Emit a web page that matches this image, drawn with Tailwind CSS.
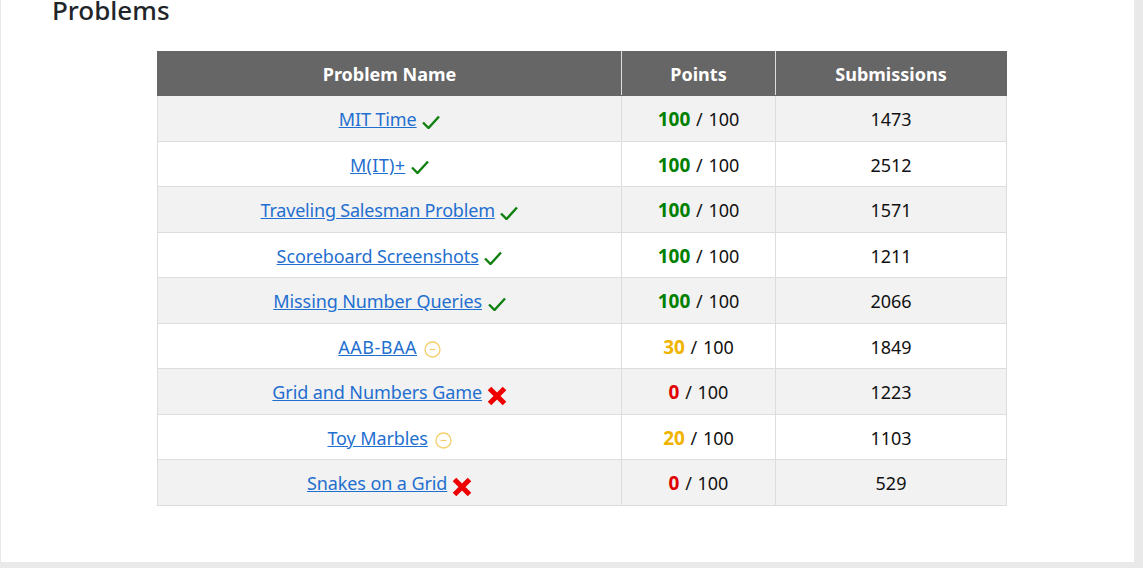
<!DOCTYPE html>
<html lang="en">

<head>
    <meta charset="UTF-8">
    <title>Problems</title>
    <script src="https://cdn.jsdelivr.net/npm/@tailwindcss/browser@4"></script>
</head>

<body class="bg-[#e9e9e9] h-[568px] overflow-hidden font-['Noto_Sans',sans-serif] text-[#111]">
    <!-- Card -->
    <div class="ml-px w-[1133px] h-[562px] bg-white pl-[51px] overflow-hidden">
        <h2 class="h-[51px] text-[26px] leading-[20px] font-medium text-[#212529]">Problems</h2>

        <table class="ml-[105px] w-[849px] table-fixed border-collapse text-[18px] text-center [&_td]:pt-[2px] [&_th]:pt-[2px] [&_td:nth-child(2)]:[word-spacing:1px]">
            <colgroup>
                <col class="w-[464px]">
                <col class="w-[154px]">
                <col class="w-[231px]">
            </colgroup>
            <thead>
                <tr class="h-[44px] bg-[#666] text-white text-[18px] font-bold">
                    <th class="border border-[#666] border-r-[#ddd]">Problem Name</th>
                    <th class="border border-[#666] border-r-[#ddd]">Points</th>
                    <th class="border border-[#666]">Submissions</th>
                </tr>
            </thead>
            <tbody>
                <tr class="h-[46px] bg-[#f2f2f2]">
                    <td class="border border-[#ddd]"><a href="#" class="text-[#1f6fd0] underline tracking-[-0.1px]">MIT Time</a>
                        <svg class="inline ml-px w-[18px] h-[14px] -mb-px" viewBox="0 0 18 14"><path d="M1 7.5 L6.5 13 L17 1.5" fill="none" stroke="#108010" stroke-width="2.4"/></svg></td>
                    <td class="border border-[#ddd]"><b class="text-[19px] text-[#008000]">100</b> / 100</td>
                    <td class="border border-[#ddd]">1473</td>
                </tr>
                <tr class="h-[45px] bg-white">
                    <td class="border border-[#ddd]"><a href="#" class="text-[#1f6fd0] underline tracking-[0.3px]">M(IT)+</a>
                        <svg class="inline ml-px w-[18px] h-[14px] -mb-px" viewBox="0 0 18 14"><path d="M1 7.5 L6.5 13 L17 1.5" fill="none" stroke="#108010" stroke-width="2.4"/></svg></td>
                    <td class="border border-[#ddd]"><b class="text-[19px] text-[#008000]">100</b> / 100</td>
                    <td class="border border-[#ddd]">2512</td>
                </tr>
                <tr class="h-[46px] bg-[#f2f2f2]">
                    <td class="border border-[#ddd]"><a href="#" class="text-[#1f6fd0] underline tracking-[-0.2px]">Traveling Salesman Problem</a>
                        <svg class="inline ml-px w-[18px] h-[14px] -mb-px" viewBox="0 0 18 14"><path d="M1 7.5 L6.5 13 L17 1.5" fill="none" stroke="#108010" stroke-width="2.4"/></svg></td>
                    <td class="border border-[#ddd]"><b class="text-[19px] text-[#008000]">100</b> / 100</td>
                    <td class="border border-[#ddd]">1571</td>
                </tr>
                <tr class="h-[45px] bg-white">
                    <td class="border border-[#ddd]"><a href="#" class="text-[#1f6fd0] underline tracking-[-0.1px]">Scoreboard Screenshots</a>
                        <svg class="inline ml-px w-[18px] h-[14px] -mb-px" viewBox="0 0 18 14"><path d="M1 7.5 L6.5 13 L17 1.5" fill="none" stroke="#108010" stroke-width="2.4"/></svg></td>
                    <td class="border border-[#ddd]"><b class="text-[19px] text-[#008000]">100</b> / 100</td>
                    <td class="border border-[#ddd]">1211</td>
                </tr>
                <tr class="h-[46px] bg-[#f2f2f2]">
                    <td class="border border-[#ddd]"><a href="#" class="text-[#1f6fd0] underline tracking-[-0.1px]">Missing Number Queries</a>
                        <svg class="inline ml-px w-[18px] h-[14px] -mb-px" viewBox="0 0 18 14"><path d="M1 7.5 L6.5 13 L17 1.5" fill="none" stroke="#108010" stroke-width="2.4"/></svg></td>
                    <td class="border border-[#ddd]"><b class="text-[19px] text-[#008000]">100</b> / 100</td>
                    <td class="border border-[#ddd]">2066</td>
                </tr>
                <tr class="h-[45px] bg-white">
                    <td class="border border-[#ddd]"><a href="#" class="text-[#1f6fd0] underline tracking-[0.5px]">AAB-BAA</a>
                        <svg class="inline ml-[2px] w-[17px] h-[17px] -mb-[2px]" viewBox="0 0 17 17"><circle cx="8.5" cy="8.5" r="7.5" fill="none" stroke="#f5cf6b" stroke-width="1.3"/><path d="M5.5 8.5 H11.5" stroke="#f5cf6b" stroke-width="1.2"/></svg></td>
                    <td class="border border-[#ddd]"><b class="text-[19px] text-[#f0b400]">30</b> / 100</td>
                    <td class="border border-[#ddd]">1849</td>
                </tr>
                <tr class="h-[46px] bg-[#f2f2f2]">
                    <td class="border border-[#ddd]"><a href="#" class="text-[#1f6fd0] underline tracking-[-0.1px]">Grid and Numbers Game</a>
                        <svg class="inline w-[20px] h-[20px] -mb-[3px]" viewBox="0 0 20 20"><path d="M2.5 2.5 L17.5 17.5 M17.5 2.5 L2.5 17.5" fill="none" stroke="#ee0000" stroke-width="5"/></svg></td>
                    <td class="border border-[#ddd]"><b class="text-[19px] text-[#e00000]">0</b> / 100</td>
                    <td class="border border-[#ddd]">1223</td>
                </tr>
                <tr class="h-[45px] bg-white">
                    <td class="border border-[#ddd]"><a href="#" class="text-[#1f6fd0] underline tracking-[-0.1px]">Toy Marbles</a>
                        <svg class="inline ml-[2px] w-[17px] h-[17px] -mb-[2px]" viewBox="0 0 17 17"><circle cx="8.5" cy="8.5" r="7.5" fill="none" stroke="#f5cf6b" stroke-width="1.3"/><path d="M5.5 8.5 H11.5" stroke="#f5cf6b" stroke-width="1.2"/></svg></td>
                    <td class="border border-[#ddd]"><b class="text-[19px] text-[#f0b400]">20</b> / 100</td>
                    <td class="border border-[#ddd]">1103</td>
                </tr>
                <tr class="h-[46px] bg-[#f2f2f2]">
                    <td class="border border-[#ddd]"><a href="#" class="text-[#1f6fd0] underline tracking-[-0.1px]">Snakes on a Grid</a>
                        <svg class="inline w-[20px] h-[20px] -mb-[3px]" viewBox="0 0 20 20"><path d="M2.5 2.5 L17.5 17.5 M17.5 2.5 L2.5 17.5" fill="none" stroke="#ee0000" stroke-width="5"/></svg></td>
                    <td class="border border-[#ddd]"><b class="text-[19px] text-[#e00000]">0</b> / 100</td>
                    <td class="border border-[#ddd]">529</td>
                </tr>
            </tbody>
        </table>
    </div>
</body>

</html>
